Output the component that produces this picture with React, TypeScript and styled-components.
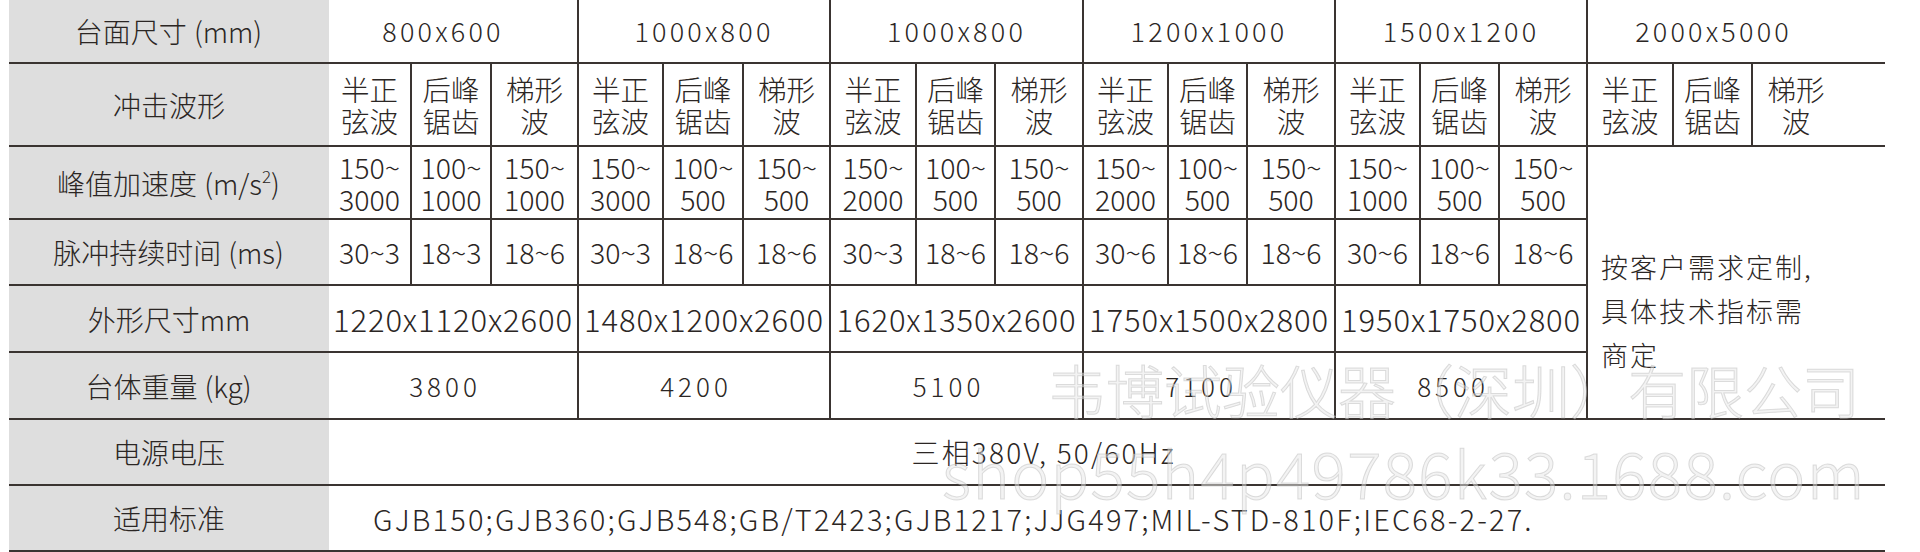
import React from 'react';
import styled, { createGlobalStyle, css } from 'styled-components';

const LINE = '#3a3431';
const INK = '#2b2624';

const Global = createGlobalStyle`
  html, body { margin: 0; padding: 0; background: #ffffff; }
  body { font-family: "Noto Sans CJK SC", "Noto Sans", sans-serif; color: ${INK}; }
`;

const Page = styled.div`
  position: relative;
  width: 1920px;
  height: 552px;
  overflow: hidden;
  padding-left: 9px;
  box-sizing: border-box;
  background: #ffffff;
`;

const Table = styled.table`
  border-collapse: collapse;
  table-layout: fixed;
  width: 1876px;
`;

const Col = styled.col<{ $w: number }>`
  width: ${(p) => p.$w}px;
`;

const Row = styled.tr<{ $h: number }>`
  height: ${(p) => p.$h}px;
`;

const Label = styled.th`
  background: #dedede;
  font-weight: 300;
  font-size: 28px;
  line-height: 32px;
  color: ${INK};
  text-align: center;
  vertical-align: middle;
  padding: 0;
  white-space: nowrap;
  border-bottom: 2px solid ${LINE};
`;

const Paren = styled.span`
  margin: 0 1px 0 7px;
`;

const Sup = styled.sup`
  font-size: 17px;
  line-height: 0;
  vertical-align: 12px;
`;

const base = css<{ $last?: boolean }>`
  padding: 0;
  text-align: center;
  vertical-align: middle;
  white-space: nowrap;
  color: ${INK};
  font-weight: 300;
  border-bottom: 2px solid ${LINE};
  border-right: ${(p) => (p.$last ? 'none' : `2px solid ${LINE}`)};
  padding-right: ${(p) => (p.$last ? '46px' : '0')};
`;

const HeadCell = styled.td<{ $last?: boolean; $shift?: number }>`
  ${base};
  font-size: 27px;
  letter-spacing: 3.2px;
  line-height: 32px;
  ${(p) => (p.$shift ? `padding-right: ${p.$shift}px;` : '')}
`;

const SubCell = styled.td<{ $last?: boolean }>`
  ${base};
  font-size: 28.5px;
  line-height: 32px;
`;

const DimCell = styled.td<{ $last?: boolean }>`
  ${base};
  font-size: 31px;
  letter-spacing: 0.9px;
  line-height: 32px;
`;

const WeightCell = styled.td<{ $last?: boolean }>`
  ${base};
  font-size: 26px;
  letter-spacing: 4px;
  line-height: 32px;
  padding-right: 16px;
`;

const NoteCell = styled.td`
  padding: 56px 0 0 13px;
  text-align: left;
  vertical-align: middle;
  white-space: nowrap;
  font-weight: 300;
  font-size: 27px;
  letter-spacing: 2px;
  line-height: 44px;
  color: ${INK};
  border-bottom: 2px solid ${LINE};
  border-left: 2px solid ${LINE};
`;

const WideCell = styled.td<{ $align: 'center' | 'left' }>`
  padding: 0;
  vertical-align: middle;
  white-space: nowrap;
  font-weight: 300;
  font-size: ${(p) => (p.$align === 'left' ? '29px' : '28px')};
  letter-spacing: ${(p) => (p.$align === 'left' ? '2.15px' : '2.2px')};
  line-height: 32px;
  color: ${INK};
  text-align: ${(p) => p.$align};
  padding-left: ${(p) => (p.$align === 'left' ? '44px' : '0')};
  padding-right: ${(p) => (p.$align === 'center' ? '127px' : '0')};
  border-bottom: 2px solid ${LINE};
`;

const Line = styled.span`
  display: block;
`;

const Watermark = styled.div<{ $top: number; $left: number; $size: number; $spacing: number }>`
  position: absolute;
  top: ${(p) => p.$top}px;
  left: ${(p) => p.$left}px;
  font-size: ${(p) => p.$size}px;
  letter-spacing: ${(p) => p.$spacing}px;
  line-height: 1;
  font-weight: 300;
  white-space: nowrap;
  color: rgba(232, 232, 232, 0.5);
  -webkit-text-stroke: 1px rgba(175, 175, 175, 0.4);
  pointer-events: none;
`;

const colWidths = [320, 82, 80, 87, 85, 80, 87, 86, 79, 88, 85, 79, 88, 85, 79, 88, 86, 79, 133];

const sizes = ['800x600', '1000x800', '1000x800', '1200x1000', '1500x1200', '2000x5000'];
const waveNames: [string, string][] = [
  ['半正', '弦波'],
  ['后峰', '锯齿'],
  ['梯形', '波'],
];
const accel: [string, string][] = [
  ['150~', '3000'], ['100~', '1000'], ['150~', '1000'],
  ['150~', '3000'], ['100~', '500'], ['150~', '500'],
  ['150~', '2000'], ['100~', '500'], ['150~', '500'],
  ['150~', '2000'], ['100~', '500'], ['150~', '500'],
  ['150~', '1000'], ['100~', '500'], ['150~', '500'],
];
const durations = [
  '30~3', '18~3', '18~6',
  '30~3', '18~6', '18~6',
  '30~3', '18~6', '18~6',
  '30~6', '18~6', '18~6',
  '30~6', '18~6', '18~6',
];
const dims = ['1220x1120x2600', '1480x1200x2600', '1620x1350x2600', '1750x1500x2800', '1950x1750x2800'];
const weights = ['3800', '4200', '5100', '7100', '8500'];

export default function App() {
  const waves = sizes.flatMap(() => waveNames);
  return (
    <>
      <Global />
      <Page>
        <Table>
          <colgroup>
            {colWidths.map((w, i) => (
              <Col key={i} $w={w} />
            ))}
          </colgroup>
          <tbody>
            <Row $h={63}>
              <Label>
                台面尺寸<Paren>(mm)</Paren>
              </Label>
              {sizes.map((s, i) => (
                <HeadCell
                  key={i}
                  colSpan={3}
                  $last={i === sizes.length - 1}
                  $shift={i === 0 ? 20 : undefined}
                >
                  {s}
                </HeadCell>
              ))}
            </Row>
            <Row $h={83}>
              <Label>冲击波形</Label>
              {waves.map(([a, b], i) => (
                <SubCell key={i} $last={i === waves.length - 1}>
                  <Line>{a}</Line>
                  <Line>{b}</Line>
                </SubCell>
              ))}
            </Row>
            <Row $h={73}>
              <Label>
                峰值加速度
                <Paren>
                  (m/s<Sup>2</Sup>)
                </Paren>
              </Label>
              {accel.map(([a, b], i) => (
                <SubCell key={i}>
                  <Line>{a}</Line>
                  <Line>{b}</Line>
                </SubCell>
              ))}
              <NoteCell rowSpan={4} colSpan={3}>
                <Line>按客户需求定制,</Line>
                <Line>具体技术指标需</Line>
                <Line>商定</Line>
              </NoteCell>
            </Row>
            <Row $h={66}>
              <Label>
                脉冲持续时间<Paren>(ms)</Paren>
              </Label>
              {durations.map((d, i) => (
                <SubCell key={i}>{d}</SubCell>
              ))}
            </Row>
            <Row $h={67}>
              <Label>外形尺寸mm</Label>
              {dims.map((d, i) => (
                <DimCell key={i} colSpan={3}>
                  {d}
                </DimCell>
              ))}
            </Row>
            <Row $h={67}>
              <Label>
                台体重量<Paren>(kg)</Paren>
              </Label>
              {weights.map((w, i) => (
                <WeightCell key={i} colSpan={3}>
                  {w}
                </WeightCell>
              ))}
            </Row>
            <Row $h={66}>
              <Label>电源电压</Label>
              <WideCell colSpan={18} $align="center">
                三相380V, 50/60Hz
              </WideCell>
            </Row>
            <Row $h={66}>
              <Label>适用标准</Label>
              <WideCell colSpan={18} $align="left">
                GJB150;GJB360;GJB548;GB/T2423;GJB1217;JJG497;MIL-STD-810F;IEC68-2-27.
              </WideCell>
            </Row>
          </tbody>
        </Table>
        <Watermark $top={360} $left={1048} $size={58} $spacing={0}>
          韦博试验仪器（深圳）有限公司
        </Watermark>
        <Watermark $top={439} $left={942} $size={64} $spacing={1.3}>
          shop55h4p49786k33.1688.com
        </Watermark>
      </Page>
    </>
  );
}
